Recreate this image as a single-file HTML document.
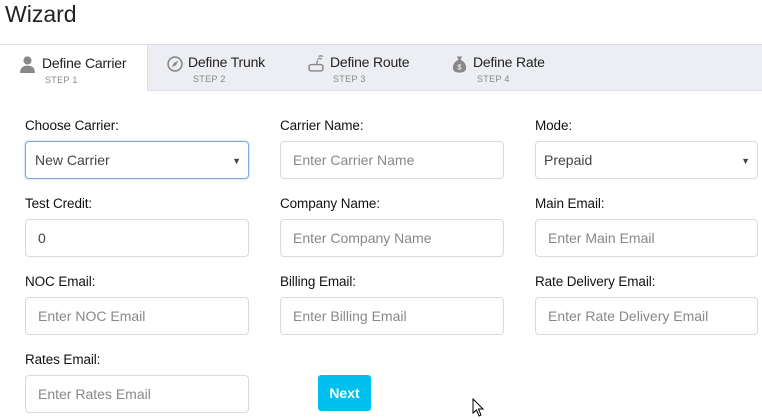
<!DOCTYPE html>
<html><head><style>
*{box-sizing:border-box;margin:0;padding:0}
body{width:762px;height:419px;background:#fff;font-family:"Liberation Sans",sans-serif;position:relative;overflow:hidden;color:#222}
.t{position:absolute;left:5px;top:1px;font-size:23px;color:#222}
.bar{position:absolute;left:0;top:44px;width:762px;height:47px;background:#eceef3;border-top:1px solid #dcdfe5;border-bottom:1px solid #dcdfe5}
.tab{position:absolute;top:44px;height:47px}
.tab.a{left:0;width:148px;background:#fff;border-top:1px solid #dcdfe5;border-right:1px solid #dcdfe5}
.tn{position:absolute;top:10px;font-size:14px;color:#222;white-space:nowrap;letter-spacing:-.2px}
.ts{position:absolute;top:30px;font-size:9px;color:#888;letter-spacing:.3px}
.ic{position:absolute;top:11px}
.l{position:absolute;font-size:13.5px;color:#111;letter-spacing:-.1px}
.i{position:absolute;height:38px;width:224px;border:1px solid #d8dadd;border-radius:4px;font-size:14px;color:#888;padding:10px 12px;line-height:16px}
.i.v{color:#444}
.i.f{border-color:#7ea7e0;box-shadow:0 0 2px #a7c3ee;padding-left:9px}
.car{position:absolute;right:7px;top:11px;font-size:9px;color:#444}
.btn{position:absolute;left:318px;top:375px;width:53px;height:36px;background:#00c0ef;border-radius:3px;color:#fff;font-size:14px;font-weight:bold;text-align:center;line-height:36px}
</style></head><body>
<div class="t">Wizard</div>
<div class="bar"></div>
<div class="tab a">
<svg class="ic" style="left:20px" width="15" height="17" viewBox="0 0 14 16"><circle cx="7" cy="4.2" r="3.8" fill="#888"/><path d="M0 16 Q0 9 7 9 Q14 9 14 16Z" fill="#888"/></svg>
<div class="tn" style="left:42px">Define Carrier</div><div class="ts" style="left:45px">STEP 1</div></div>
<div class="tab" style="left:148px;width:140px">
<svg class="ic" style="left:19px;top:12px" width="16" height="16" viewBox="0 0 15 15"><circle cx="7.5" cy="7.5" r="6.5" fill="none" stroke="#888" stroke-width="1.5"/><path d="M10.5 4.5 L8.5 8.5 L4.5 10.5 L6.5 6.5Z" fill="#888"/></svg>
<div class="tn" style="left:40px">Define Trunk</div><div class="ts" style="left:45px">STEP 2</div></div>
<div class="tab" style="left:288px;width:136px">
<svg class="ic" style="left:20px" width="17" height="17" viewBox="0 0 16 16"><rect x="1" y="9" width="13" height="6" rx="2" fill="none" stroke="#888" stroke-width="1.4"/><path d="M8 9 L9 5 M9 4 Q11 2.5 13 4 M10 1.5 Q12 0 14 1.5" fill="none" stroke="#888" stroke-width="1.3"/></svg>
<div class="tn" style="left:42px">Define Route</div><div class="ts" style="left:45px">STEP 3</div></div>
<div class="tab" style="left:424px;width:140px">
<svg class="ic" style="left:28px" width="15" height="18" viewBox="0 0 14 16"><path d="M4.5 1 L9.5 1 L8 4 Q14 7 13 13 Q12 16 7 16 Q2 16 1 13 Q0 7 6 4Z" fill="#888"/><text x="7" y="13" font-size="7" fill="#fff" text-anchor="middle" font-family="Liberation Sans">$</text></svg>
<div class="tn" style="left:49px">Define Rate</div><div class="ts" style="left:53px">STEP 4</div></div>

<div class="l" style="left:25px;top:118px">Choose Carrier:</div>
<div class="l" style="left:280px;top:118px">Carrier Name:</div>
<div class="l" style="left:535px;top:118px">Mode:</div>
<div class="i v f" style="left:25px;top:141px">New Carrier<span class="car">▼</span></div>
<div class="i" style="left:280px;top:141px">Enter Carrier Name</div>
<div class="i v" style="left:535px;top:141px;width:223px;padding-left:8px">Prepaid<span class="car">▼</span></div>

<div class="l" style="left:25px;top:196px">Test Credit:</div>
<div class="l" style="left:280px;top:196px">Company Name:</div>
<div class="l" style="left:535px;top:196px">Main Email:</div>
<div class="i v" style="left:25px;top:219px">0</div>
<div class="i" style="left:280px;top:219px">Enter Company Name</div>
<div class="i" style="left:535px;top:219px;width:223px">Enter Main Email</div>

<div class="l" style="left:25px;top:274px">NOC Email:</div>
<div class="l" style="left:280px;top:274px">Billing Email:</div>
<div class="l" style="left:535px;top:274px">Rate Delivery Email:</div>
<div class="i" style="left:25px;top:297px">Enter NOC Email</div>
<div class="i" style="left:280px;top:297px">Enter Billing Email</div>
<div class="i" style="left:535px;top:297px;width:223px">Enter Rate Delivery Email</div>

<div class="l" style="left:25px;top:352px">Rates Email:</div>
<div class="i" style="left:25px;top:375px">Enter Rates Email</div>
<div class="btn">Next</div>
<svg style="position:absolute;left:472px;top:398px" width="14" height="20" viewBox="0 0 14 20"><path d="M1 1 L1 15 L4.5 12 L7 18 L9 17 L6.5 11 L11 11Z" fill="#fff" stroke="#000" stroke-width="1"/></svg>
</body></html>
